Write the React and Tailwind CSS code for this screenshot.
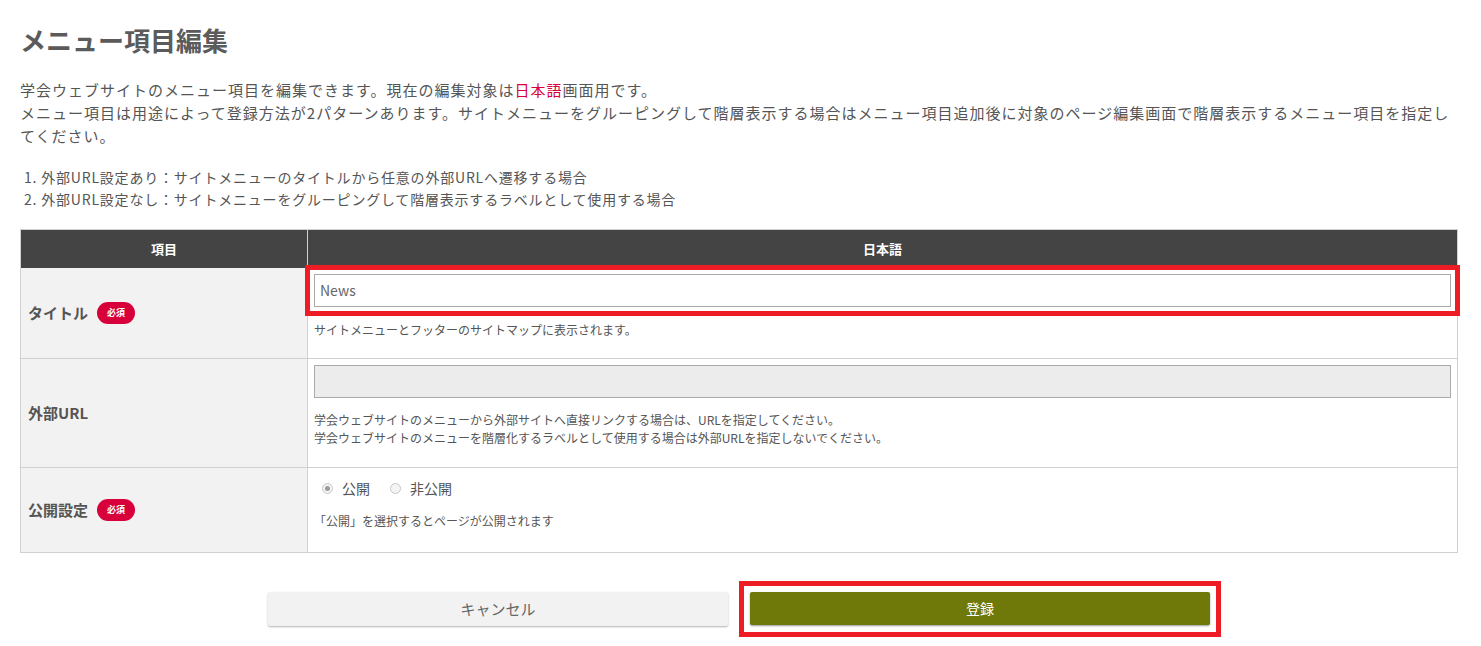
import React from "react";

const font = {
  fontFamily: '"Noto Sans CJK JP", "Noto Sans", "Liberation Sans", sans-serif',
};

function Badge() {
  return (
    <span className="inline-flex items-center justify-center w-[38px] h-[22px] rounded-full bg-[#d7003a] text-white text-[9px] font-bold ml-[9px]">
      必須
    </span>
  );
}

function Radio({ checked, label }) {
  return (
    <label className="flex items-center gap-[9px] mr-[20px]">
      <span className="w-[11px] h-[11px] rounded-full border border-[#c8c8c8] bg-[#f4f4f4] flex items-center justify-center">
        {checked && <span className="w-[5px] h-[5px] rounded-full bg-[#9a9a9a]" />}
      </span>
      <span className="text-[14px] text-[#555]">{label}</span>
    </label>
  );
}

export default function App() {
  return (
    <div className="bg-white w-[1481px] h-[646px] overflow-hidden pl-5 pr-[23px]" style={font}>
      <h1 className="text-[26px] font-bold text-[#5b5b5b] pt-[22px] leading-[36px]">メニュー項目編集</h1>

      <div className="mt-[20px] text-[15px] leading-[23px] tracking-[1px] text-[#555]">
        <p>
          学会ウェブサイトのメニュー項目を編集できます。現在の編集対象は
          <span className="text-[#d7003a]">日本語</span>画面用です。
        </p>
        <p>
          メニュー項目は用途によって登録方法が2パターンあります。サイトメニューをグルーピングして階層表示する場合はメニュー項目追加後に対象のページ編集画面で階層表示するメニュー項目を指定してください。
        </p>
      </div>

      <ol className="mt-[19px] pl-[4px] text-[14px] leading-[22px] tracking-[0.8px] text-[#555]">
        <li>1. 外部URL設定あり：サイトメニューのタイトルから任意の外部URLへ遷移する場合</li>
        <li>2. 外部URL設定なし：サイトメニューをグルーピングして階層表示するラベルとして使用する場合</li>
      </ol>

      <div className="mt-[19px] border border-[#d0d0d0] grid grid-cols-[287px_1fr] text-[#555]">
        <div className="h-[38px] bg-[#444] text-white text-[13px] font-bold flex items-center justify-center border-r border-[#d0d0d0]">
          項目
        </div>
        <div className="h-[38px] bg-[#444] text-white text-[13px] font-bold flex items-center justify-center">
          日本語
        </div>

        <div className="h-[91px] bg-[#f2f2f2] border-r border-b border-[#d0d0d0] flex items-center px-[7px] text-[15px] font-bold">
          タイトル
          <Badge />
        </div>
        <div className="h-[91px] border-b border-[#d0d0d0] pt-[6px] px-[6px]">
          <div className="outline-[5px] outline-solid outline-[#ee1c25] outline-offset-[4px]">
            <div className="h-[33px] border border-[#aaa] bg-white flex items-center px-[5px] text-[14px] text-[#666]">
              News
            </div>
          </div>
          <p className="mt-[14px] text-[12px] leading-[18px] text-[#555]">サイトメニューとフッターのサイトマップに表示されます。</p>
        </div>

        <div className="h-[109px] bg-[#f2f2f2] border-r border-b border-[#d0d0d0] flex items-center px-[7px] text-[15px] font-bold">
          外部URL
        </div>
        <div className="h-[109px] border-b border-[#d0d0d0] pt-[6px] px-[6px]">
          <div className="h-[33px] border border-[#aaa] bg-[#ececec]" />
          <div className="mt-[13px] text-[12px] leading-[18px] text-[#555]">
            <p>学会ウェブサイトのメニューから外部サイトへ直接リンクする場合は、URLを指定してください。</p>
            <p>学会ウェブサイトのメニューを階層化するラベルとして使用する場合は外部URLを指定しないでください。</p>
          </div>
        </div>

        <div className="h-[84px] bg-[#f2f2f2] border-r border-[#d0d0d0] flex items-center px-[7px] text-[15px] font-bold">
          公開設定
          <Badge />
        </div>
        <div className="h-[84px] pt-[10px] px-[14px]">
          <div className="flex items-center">
            <Radio checked label="公開" />
            <Radio label="非公開" />
          </div>
          <p className="mt-[13px] -ml-[8px] text-[12px] leading-[18px] text-[#555]">「公開」を選択するとページが公開されます</p>
        </div>
      </div>

      <div className="mt-[39px] flex justify-center gap-[22px]">
        <button className="w-[460px] h-[34px] bg-[#f2f2f2] rounded-[2px] shadow-[0_1px_2px_rgba(0,0,0,0.3)] text-[15px] text-[#666]">
          キャンセル
        </button>
        <div className="outline-[5px] outline-solid outline-[#ee1c25] outline-offset-[6px]">
          <button className="w-[460px] h-[33px] bg-[#6e790a] rounded-[2px] shadow-[0_1px_2px_rgba(0,0,0,0.4)] text-[14px] text-white">
            登録
          </button>
        </div>
      </div>
    </div>
  );
}
